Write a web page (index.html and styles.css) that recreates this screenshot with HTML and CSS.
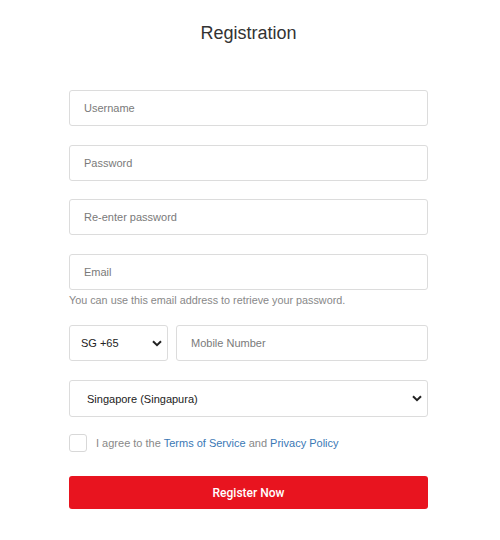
FILE: index.html
```html
<!DOCTYPE html>
<html>
<head>
<meta charset="utf-8">
<link rel="stylesheet" href="styles.css">
</head>
<body>
<div class="page">
  <h1 class="title">Registration</h1>
  <form class="form">
    <div class="field"><input class="input" type="text" placeholder="Username"></div>
    <div class="field field-tight"><input class="input" type="password" placeholder="Password"></div>
    <div class="field"><input class="input" type="password" placeholder="Re-enter password"></div>
    <div class="field field-email">
      <input class="input" type="text" placeholder="Email">
      <p class="help">You can use this email address to retrieve your password.</p>
    </div>
    <div class="phone-row">
      <div class="select small">
        <span>SG +65</span>
        <svg class="chev" viewBox="0 0 10 7" width="10" height="7"><path d="M1 1.2 L5 5.2 L9 1.2" fill="none" stroke="#222" stroke-width="2"/></svg>
      </div>
      <input class="input mobile" type="text" placeholder="Mobile Number">
    </div>
    <div class="select country">
      <span>Singapore (Singapura)</span>
      <svg class="chev" viewBox="0 0 10 7" width="10" height="7"><path d="M1 1.2 L5 5.2 L9 1.2" fill="none" stroke="#222" stroke-width="2"/></svg>
    </div>
    <label class="agree">
      <span class="box"></span>
      <span class="agree-text">I agree to the <a href="#">Terms of Service</a> and <a href="#">Privacy Policy</a></span>
    </label>
    <button type="button" class="btn">Register Now</button>
  </form>
</div>
</body>
</html>
```
FILE: styles.css
```css
* { box-sizing: border-box; }
html, body { margin: 0; padding: 0; background: #fff; }
body { font-family: "Liberation Sans", Arial, sans-serif; color: #333; }
.page { width: 359px; margin-left: 69px; padding-top: 23px; }
.title { margin: 0; text-align: center; font-size: 18px; font-weight: 400; color: #333; line-height: 21px; }
.form { display: flex; flex-direction: column; margin-top: 46px; }
.field { margin-bottom: 19px; }
.field-tight { margin-bottom: 18px; }
.field-email { margin-bottom: 18px; }
.input {
  display: block; width: 100%; height: 36px;
  border: 1px solid #dcdcdc; border-radius: 3px;
  padding: 0 14px; font-family: inherit; font-size: 11px; color: #333;
  background: #fff; outline: none;
}
.input::placeholder { color: #7a7a7a; }
.help { margin: 3px 0 0; font-size: 10.8px; color: #888; line-height: 14px; }
.phone-row { display: flex; gap: 8px; margin-bottom: 19px; }
.select {
  display: flex; align-items: center; justify-content: space-between;
  border: 1px solid #dcdcdc; border-radius: 3px; background: #fff;
  font-size: 11px; color: #222;
}
.select.small { width: 99px; height: 36px; padding: 0 5px 0 11px; flex: none; }
.mobile { flex: 1; width: auto; }
.select.country { height: 37px; padding: 0 5px 0 17px; margin-bottom: 17px; }
.chev { display: block; }
.agree { display: flex; align-items: center; gap: 9px; margin-bottom: 24px; font-size: 11px; color: #888; }
.box { width: 18px; height: 18px; border: 1px solid #d8d8d8; border-radius: 3px; flex: none; }
.agree a { color: #3a78b5; text-decoration: none; }
.btn {
  height: 33px; border: none; border-radius: 3px; background: #e8141f;
  color: #fff; font-family: Roboto, "Liberation Sans", sans-serif; font-weight: 500; font-size: 12px;
}
```
